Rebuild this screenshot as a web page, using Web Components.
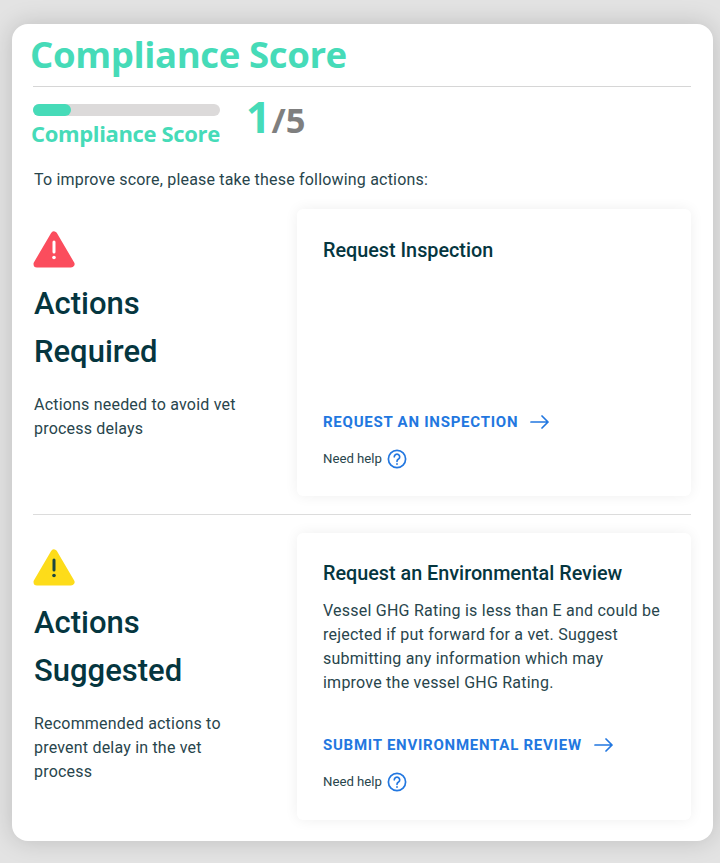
<!DOCTYPE html>
<html><head><meta charset="utf-8"><style>
html,body{margin:0;height:863px;background:#e3e3e3;overflow:hidden}
body{font-family:Roboto,sans-serif;color:#05363f}
</style></head><body>
<template id="t-score"><style>
:host{display:block;box-sizing:border-box;width:701px;height:817px;margin:24px 0 0 12px;background:#fff;border-radius:16px;box-shadow:0 0 24px rgba(0,0,0,.17);padding:0 22px 0 21px}
h1{margin:0 0 0 -3px;padding:6px 0 0;height:62px;box-sizing:border-box;font:700 36.6px/48px "Open Sans",sans-serif;color:#46dbb8;letter-spacing:-.4px}
.rule{height:1px;background:#d6d6d6;margin-bottom:17px}
.score{display:flex;gap:26px;height:52px}
.col{width:187px}
.track{height:12px;border-radius:6px;background:#dcdada;margin-bottom:5px}
.fill{width:38px;height:12px;border-radius:6px;background:#46dbb8}
.lbl{font:700 22px/24px "Open Sans",sans-serif;color:#46dbb8;letter-spacing:-.35px;margin-left:-2px;white-space:nowrap}
.num{font:700 34.500px/36px "Open Sans",sans-serif;color:#7f7f7f;white-space:nowrap;margin-top:-5px}
.num b{font-size:43px;line-height:36px;color:#46dbb8;font-weight:700;margin-right:1px}
p{margin:0 0 0 1px;padding-top:12px;font-size:16px;line-height:24px;color:#28454c;letter-spacing:.19px;height:41px;box-sizing:content-box}
</style>
<h1>Compliance Score</h1><div class="rule"></div>
<div class="score"><div class="col"><div class="track"><div class="fill"></div></div><div class="lbl">Compliance Score</div></div>
<div class="num"><b>1</b>/5</div></div>
<p>To improve score, please take these following actions:</p>
<slot></slot></template>

<template id="t-sec"><style>
:host{display:grid;grid-template-columns:264px 394px;height:306px;box-sizing:border-box}
:host(.first){border-bottom:1px solid #dcdcdc}
.side{padding:var(--side-pad,22px) 0 0 1px}
h2{margin:0 0 17px;font:500 31px/48px Roboto,sans-serif;color:#05363f;width:200px}
.d{font-size:16px;line-height:24px;color:#28454c;width:220px;letter-spacing:.2px}
</style><div class="side"><slot name="icon"></slot><h2><slot name="title"></slot></h2><div class="d"><slot name="desc"></slot></div></div><slot name="card"></slot></template>

<template id="t-card"><style>
:host{display:flex;flex-direction:column;box-sizing:border-box;width:394px;height:287px;padding:var(--card-pad,29px) 26px 0;background:#fff;border-radius:6px;box-shadow:0 0 14px rgba(0,0,0,.065)}
h3{margin:0 0 var(--h3-gap,13px);font:500 19.800px/26px Roboto,sans-serif;color:#05363f}
.b{flex:0 0 var(--body-h,133px);font-size:16px;line-height:24px;color:#28454c;letter-spacing:.23px}
a{display:flex;align-items:center;gap:12px;font:700 15px/24px Roboto,sans-serif;letter-spacing:.75px;color:#2277e0;text-transform:uppercase}
.h{display:flex;align-items:center;gap:5px;margin-top:14px;font-size:13.2px;line-height:22px;color:#28454c}
svg{display:block}
</style><h3><slot name="title"></slot></h3><div class="b"><slot name="body"></slot></div>
<a><slot name="link"></slot><svg width="19" height="16" viewBox="0 0 19 16" fill="none" stroke="#2277e0" stroke-width="1.7" stroke-linecap="round" stroke-linejoin="round"><path d="M1 8h17M12 2l6 6-6 6"/></svg></a>
<div class="h">Need help <svg width="20" height="20" viewBox="0 0 20 20" fill="none" stroke="#2277e0" stroke-width="1.7"><circle cx="10" cy="10" r="8.6"/><path d="M7.3 7.8a2.7 2.7 0 1 1 4.2 2.3c-1 .6-1.5 1.1-1.5 2.2" stroke-linecap="round"/><circle cx="10" cy="15" r=".5" fill="#2277e0" stroke-width="1"/></svg></div></template>

<compliance-score>
<action-section class="first">
<svg slot="icon" style="display:block;width:42px;height:38px;margin:0 0 11px -1px" viewBox="0 0 42 38"><path d="M21 4 L38 33 H4 Z" fill="#fb4d5d" stroke="#fb4d5d" stroke-width="7" stroke-linejoin="round"/><path d="M21 11v10" stroke="#fff" stroke-width="3" stroke-linecap="round"/><circle cx="21" cy="26.500" r="1.800" fill="#fff"/></svg>
<span slot="title">Actions Required</span>
<span slot="desc" style="display:block;margin-top:1px">Actions needed to avoid vet process delays</span>
<action-card slot="card"><span slot="title">Request Inspection</span><span slot="link">Request an Inspection</span></action-card>
</action-section>
<action-section style="padding-top:18px;height:326px;--side-pad:16px;--card-pad:28px;--h3-gap:12px;--body-h:134px">
<svg slot="icon" style="display:block;width:42px;height:38px;margin:0 0 12px -1px" viewBox="0 0 42 38"><path d="M21 4 L38 33 H4 Z" fill="#fddc1a" stroke="#fddc1a" stroke-width="7" stroke-linejoin="round"/><path d="M21 11v10" stroke="#1b4640" stroke-width="3" stroke-linecap="round"/><circle cx="21" cy="26.500" r="1.800" fill="#1b4640"/></svg>
<span slot="title">Actions Suggested</span>
<span slot="desc" style="display:block;margin-top:1px">Recommended actions to prevent delay in the vet process</span>
<action-card slot="card"><span slot="title">Request an Environmental Review</span><span slot="body">Vessel GHG Rating is less than E and could be rejected if put forward for a vet. Suggest submitting any information which may improve the vessel GHG Rating.</span><span slot="link">Submit Environmental Review</span></action-card>
</action-section>
</compliance-score>
<script>
function def(n,id){customElements.define(n,class extends HTMLElement{constructor(){super();this.attachShadow({mode:'open'}).appendChild(document.getElementById(id).content.cloneNode(true))}})}
def('compliance-score','t-score');def('action-section','t-sec');def('action-card','t-card');
</script>
</body></html>
